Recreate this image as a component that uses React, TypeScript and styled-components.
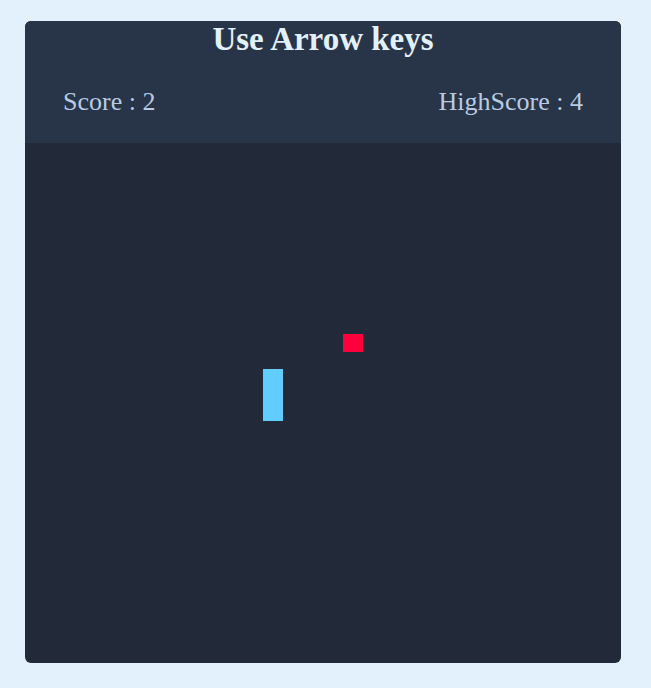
import React from "react";
import styled, { createGlobalStyle } from "styled-components";

const Global = createGlobalStyle`
  html, body { margin: 0; padding: 0; background: #e3f1fd; }
  body { font-family: "Liberation Serif", "Times New Roman", serif; }
`;

const Page = styled.div`
  padding: 21px 30px 25px 25px;
`;

const Card = styled.div`
  width: 596px;
  border-radius: 6px;
  overflow: hidden;
  background: #222938;
`;

const Header = styled.div`
  height: 122px;
  background: #283447;
  display: flex;
  flex-direction: column;
`;

const Title = styled.h1`
  margin: 0;
  font-size: 33px;
  font-weight: bold;
  text-align: center;
  color: #e3f1fd;
  line-height: 37px;
`;

const ScoreRow = styled.div`
  display: flex;
  justify-content: space-between;
  padding: 29px 38px 0 38px;
  font-size: 26px;
  line-height: 30px;
  color: #b8cbe3;
`;

const Board = styled.div`
  position: relative;
  height: 520px;
`;

const Cell = styled.div<{ $color: string }>`
  position: absolute;
  background: ${(p) => p.$color};
`;

const snake = [{ x: 238, y: 226, w: 20, h: 52 }];
const food = { x: 318, y: 191, w: 20, h: 18 };

export default function App() {
  return (
    <>
      <Global />
      <Page>
        <Card>
          <Header>
            <Title>Use Arrow keys</Title>
            <ScoreRow>
              <span>Score : 2</span>
              <span>HighScore : 4</span>
            </ScoreRow>
          </Header>
          <Board>
            {snake.map((s, i) => (
              <Cell
                key={i}
                $color="#61cdff"
                style={{ left: s.x, top: s.y, width: s.w, height: s.h }}
              />
            ))}
            <Cell
              $color="#ff003c"
              style={{ left: food.x, top: food.y, width: food.w, height: food.h }}
            />
          </Board>
        </Card>
      </Page>
    </>
  );
}
